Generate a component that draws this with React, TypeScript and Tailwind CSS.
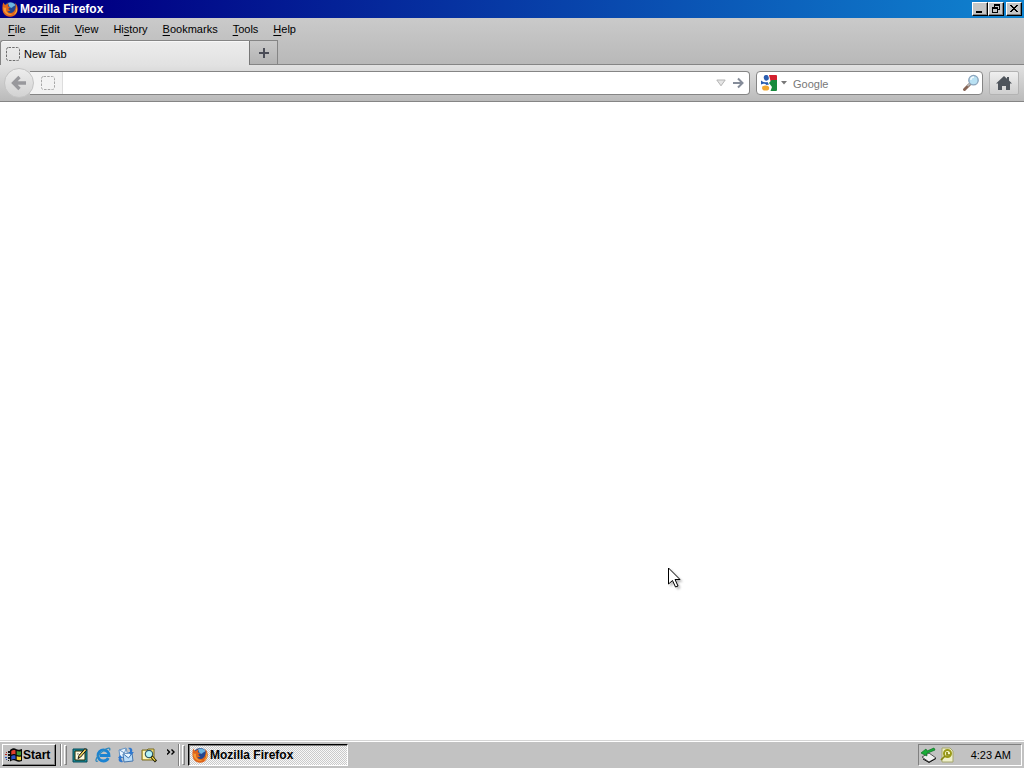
import type { ReactNode } from "react";

function FirefoxIcon() {
  return (
    <svg width="16" height="16" viewBox="0 0 16 16" className="shrink-0" aria-hidden="true">
      <circle cx="8.3" cy="8" r="7" fill="#23468f" />
      <path d="M6 2.200C8 .8 12 1.400 13.400 4c-1 1.600-2.200 1-3 2.200S8 6.600 7 5z" fill="#6db6e0" />
      <path d="M1.200 1.500C.2 4.500 0 9 1.200 11.500 2.800 14.800 6 16 8.500 15.800c4.500-.2 7.300-4 7.200-8C15.600 5 14.500 3 13 2c.8 2 .9 3.800.4 5.300C12.600 10.600 10.700 12 8.600 12c-1.900 0-3-1-3.300-2 1 .4 2.200.1 3.100-.7C7 9 6.500 8.500 6.300 7.600c.9-.3 1.600-.7 1.800-1.300-1-.2-1.900-.7-2.300-1.600.2-1 .6-1.500 1.200-2C5.500 2.600 4.500 3 3.700 4 2.700 3.700 2 2.700 1.200 1.500z" fill="#df641a" />
      <path d="M1.500 6c-.3 2.500.4 4.500 2 6 2 2 5 2.600 7.500 1.300-3.500.2-6.600-1.300-7-4.300-.1-1 0-1.600.3-2.200C3.200 7 2.200 6.800 1.500 6z" fill="#f39a35" />
      <path d="M13.900 5c1.200 3.200.4 6.500-2 8.500 3.200-1.200 4-5 2-8.500z" fill="#fbd44c" />
    </svg>
  );
}

function DashedIcon({ faint = false }: { faint?: boolean }) {
  return (
    <svg width="16" height="16" viewBox="0 0 16 16" className="shrink-0" aria-hidden="true">
      <rect x="1.500" y="1.500" width="13" height="13" rx="2" fill="none" stroke={faint ? "#a8a8a8" : "#6d6d6d"} strokeDasharray="2.500 1.200" />
    </svg>
  );
}

function CaptionButton({ label, children }: { label: string; children: ReactNode }) {
  return (
    <button
      aria-label={label}
      className="flex h-[14px] w-4 items-center justify-center border border-t-white border-r-black border-b-black border-l-white bg-[#c6c6c6] shadow-[inset_-1px_-1px_#808080]"
    >
      <svg width="12" height="12" viewBox="0 0 12 12" shapeRendering="crispEdges" className="shrink-0" aria-hidden="true">
        {children}
      </svg>
    </button>
  );
}

const menus: [string, string, string][] = [
  ["", "F", "ile"],
  ["", "E", "dit"],
  ["", "V", "iew"],
  ["Hi", "s", "tory"],
  ["", "B", "ookmarks"],
  ["", "T", "ools"],
  ["", "H", "elp"],
];

function TitleBar() {
  return (
    <header className="flex h-[18px] items-center bg-linear-to-r/srgb from-[#000084] from-10% to-[#1084d0] px-[2px]">
      <FirefoxIcon />
      <h1 className="ml-[2px] grow text-[12px] font-bold text-white">Mozilla Firefox</h1>
      <div className="flex">
        <CaptionButton label="Minimize">
          <path d="M2 8h6v2H2z" />
        </CaptionButton>
        <CaptionButton label="Restore">
          <path d="M4 1h6v2H4zM9 3h1v4H9zM8 6h2v1H8zM4 3h1v1H4zM2 4h6v2H2zM2 6h1v4H2zM7 6h1v4H7zM2 9h6v1H2z" />
        </CaptionButton>
      </div>
      <div className="ml-[2px] flex">
        <CaptionButton label="Close">
          <path d="M2 2h2v1H2zM8 2h2v1H8zM3 3h2v1H3zM7 3h2v1H7zM4 4h4v1H4zM5 5h2v1H5zM4 6h4v1H4zM3 7h2v1H3zM7 7h2v1H7zM2 8h2v1H2zM8 8h2v1H8z" />
        </CaptionButton>
      </div>
    </header>
  );
}

function SearchEngineIcon() {
  return (
    <svg width="16" height="16" viewBox="0 0 16 16" aria-hidden="true">
      <path d="M8 0h7a1 1 0 0 1 1 1v5H9.500z" fill="#d3202e" />
      <path d="M10.500 5H16v10a1 1 0 0 1-1 1H9.500l1.500-4-3-4z" fill="#178a3c" />
      <ellipse cx="5.300" cy="2.800" rx="2.500" ry="2.900" fill="#2a5db0" transform="rotate(-15 5.300 2.800)" />
      <path d="M0 5.500c2 2 4 1.800 6.500 1.500L8 9.500 5.500 10C4.500 8.500 2 8.200 0 9.500z" fill="#2a5db0" />
      <ellipse cx="4.600" cy="13" rx="3.600" ry="2.600" fill="#f2a72e" />
    </svg>
  );
}

function Toolbar() {
  return (
    <div className="flex h-[37px] items-center border-b border-[#858585] bg-linear-to-b from-[#e2e2e2] to-[#bababa] pr-[5px] pl-1">
      <button
        aria-label="Back"
        className="z-10 flex size-[30px] shrink-0 items-center justify-center rounded-full border border-[#c4c4c4] bg-linear-to-b from-[#ededed] to-[#d2d2d2]"
      >
        <svg width="16" height="16" viewBox="0 0 16 16" aria-hidden="true">
          <path d="M8.500 2L2.500 8l6 6M3 8h12" fill="none" stroke="#98989c" strokeWidth="3.300" />
        </svg>
      </button>
      <div className="-ml-1 flex h-6 grow items-center rounded-r-sm border border-l-0 border-[#858585] bg-white">
        <div className="flex h-full w-[33px] items-center justify-center border-r border-[#ddd] bg-[#f3f3f3] pl-[3px]">
          <DashedIcon faint />
        </div>
        <input aria-label="Address" className="h-full min-w-0 grow px-1 text-[11px] outline-none" />
        <button aria-label="Show history" className="flex w-[18px] justify-center">
          <svg width="10" height="8" viewBox="0 0 10 8" aria-hidden="true">
            <path d="M.8 1h8.400L5 6.800z" fill="#e6e6e6" stroke="#b4b4b4" />
          </svg>
        </button>
        <button aria-label="Go" className="mr-[3px] flex w-4 justify-center">
          <svg width="12" height="12" viewBox="0 0 12 12" aria-hidden="true">
            <path d="M1 6h9M6 1.500L10.500 6 6 10.500" fill="none" stroke="#858c99" strokeWidth="2" />
          </svg>
        </button>
      </div>
      <div className="ml-[6px] flex h-6 w-[227px] items-center rounded-sm border border-[#858585] bg-white pr-[2px] pl-1">
        <button aria-label="Search engine" className="flex items-center gap-1">
          <SearchEngineIcon />
          <svg width="6" height="4" viewBox="0 0 6 4" aria-hidden="true">
            <path d="M0 0h6L3 3.500z" fill="#777" />
          </svg>
        </button>
        <input
          aria-label="Search"
          placeholder="Google"
          className="ml-[6px] h-full min-w-0 grow pt-px text-[11px] outline-none placeholder:text-[#777]"
        />
        <button aria-label="Submit search">
          <svg width="18" height="18" viewBox="0 0 18 18" className="block" aria-hidden="true">
            <path d="M7.500 10.500L2.500 15.500" stroke="#876657" strokeWidth="3" strokeLinecap="round" />
            <path d="M8 9.500l-2.500 2.500" stroke="#b5b5b5" strokeWidth="2" />
            <circle cx="11.500" cy="6.200" r="4.700" fill="#b9e1f3" stroke="#8ba5bd" strokeWidth="1.400" />
            <path d="M8.800 6c.2-2 1.600-3 3.200-3" stroke="#f2fbff" strokeWidth="1.400" fill="none" />
          </svg>
        </button>
      </div>
      <button
        aria-label="Home"
        className="ml-[6px] flex h-6 w-[30px] items-center justify-center rounded-[2px] border border-[#b3b3b3] bg-linear-to-b from-[#efefef] to-[#cfcfcf]"
      >
        <svg width="16" height="14" viewBox="0 0 16 14" aria-hidden="true">
          <path d="M8 0L0 7.500h2V14h4v-4h4v4h4V7.500h2l-3-3V1h-2v1.700z" fill="#4e545b" />
        </svg>
      </button>
    </div>
  );
}

function Grip() {
  return <span className="h-5 w-[3px] border border-t-white border-r-[#808080] border-b-[#808080] border-l-white" />;
}

function Divider() {
  return <span className="h-[22px] w-[2px] border-r border-l border-r-white border-l-[#808080]" />;
}

function WindowsIcon() {
  return (
    <svg width="17" height="16" viewBox="0 0 17 16" className="shrink-0" aria-hidden="true">
      <path d="M5 3c2-2 5-2 6-1 2 1 3 1 6 0v12c-3 1-4 1-6 0-1-1-4-1-6 .5z" fill="#080808" />
      <path d="M6.300 4c1.500-1.200 3-1.200 4.200-.6v4c-1.200-.6-2.700-.6-4.200.3z" fill="#e0402c" />
      <path d="M11.700 4c1.500.6 2.800.6 4.300.2v4c-1.500.4-2.800.4-4.300-.2z" fill="#3d9838" />
      <path d="M6.300 9c1.500-.9 3-.9 4.200-.3v3.800c-1.200-.6-2.700-.5-4.200.4z" fill="#2b52c4" />
      <path d="M11.700 9.300c1.500.5 2.800.5 4.300.1v3.500c-1.500.4-2.800.4-4.300-.2z" fill="#f1cf32" />
      <path d="M3 4h2v2H3zM3 7h2v2H3zM3 10h2v2H3zM3 13h1v1H3z" fill="#111" />
      <path d="M1 5h1v1H1zM0 7h2v1H0z" fill="#b32721" />
      <path d="M0 10h2v1H0zM1 12h1v1H1z" fill="#244bc0" />
    </svg>
  );
}

const launchers: { label: string; art: ReactNode }[] = [
  {
    label: "Show Desktop",
    art: (
      <>
        <path d="M1 2h14v13H1z" fill="#168b9d" stroke="#064a56" />
        <path d="M3 4h10v9H3z" fill="#fffce0" stroke="#292900" />
        <path d="M5 7c2-1 3 2 4 1" fill="none" stroke="#777" />
        <path d="M6 11.500l1-3 6-7 1.600 1.600-6 7z" fill="#f1d45c" stroke="#111" />
      </>
    ),
  },
  {
    label: "Internet Explorer",
    art: (
      <>
        <path d="M13.300 11c-1 2-2.600 3-4.800 3a5.500 5.500 0 1 1 5.500-5.500H5" fill="none" stroke="#1b83d2" strokeWidth="2.800" />
        <path d="M5 7c1-2 2-3 4-3" fill="none" stroke="#67c5f3" strokeWidth="1.200" />
        <path d="M3 14C-2 16 3 7 8 4c5-3.500 8-4 6.500-.5" fill="none" stroke="#3188bb" strokeWidth="1.300" />
      </>
    ),
  },
  {
    label: "Outlook Express",
    art: (
      <>
        <path d="M1 3l7-2 2 8-8 2z" fill="#e9f5ff" stroke="#6693c2" />
        <path d="M1.500 3l5 3L8 1.500" fill="none" stroke="#6693c2" />
        <path d="M5 7l9-1 1 8-9 1z" fill="#b9ddfa" stroke="#4476ae" />
        <path d="M5.500 7l5 4L14 6.500" fill="#eaf7ff" stroke="#4476ae" />
        <path d="M10 1c4-1 5 2 4 4h2l-3 3-3-3h2c0-2 0-3-2-4zM5 15C1 16 0 13 1 11H0l2-3 3 3H3c0 1 1 2 2 4z" fill="#2e78cf" />
      </>
    ),
  },
  {
    label: "Search",
    art: (
      <>
        <path d="M1 3h5l1-1h6v11H1z" fill="#f7df72" stroke="#786b20" />
        <path d="M2 4h6v8H2z" fill="#fff8ba" />
        <circle cx="8" cy="7" r="3.700" fill="#b5f3f6" stroke="#345b67" strokeWidth="1.200" />
        <path d="M10.500 9.500l4.500 5" stroke="#191900" strokeWidth="2.800" />
        <path d="M11 10l3.300 3.700" stroke="#ffe249" strokeWidth="1.200" />
      </>
    ),
  },
];

function Taskbar() {
  return (
    <footer className="flex h-7 items-center border-t border-[#d5d5d5] bg-[#c2c2c2] px-[2px] pt-px text-black shadow-[inset_0_1px_#fff]">
      <button className="flex h-[22px] w-[54px] items-center gap-px border border-t-white border-r-black border-b-black border-l-white pl-[2px] text-[12px] font-bold shadow-[inset_-1px_-1px_#808080]">
        <WindowsIcon />
        <span>Start</span>
      </button>
      <div className="ml-1 flex items-center gap-[2px]">
        <Divider />
        <Grip />
      </div>
      <nav aria-label="Quick launch" className="ml-[5px] flex items-center gap-[7px]">
        {launchers.map(({ label, art }) => (
          <button key={label} aria-label={label}>
            <svg width="16" height="16" viewBox="0 0 16 16" className="block" aria-hidden="true">
              {art}
            </svg>
          </button>
        ))}
        <button aria-label="More" className="mb-[6px] ml-[3px]">
          <svg width="8" height="6" viewBox="0 0 8 6" className="block" aria-hidden="true">
            <path d="M0 .5L2.500 3 0 5.500M4.500.5L7 3 4.500 5.500" fill="none" stroke="#000" strokeWidth="1.400" />
          </svg>
        </button>
      </nav>
      <div className="ml-[3px] flex items-center gap-[2px]">
        <Divider />
        <Grip />
      </div>
      <button className="ml-[3px] flex h-[22px] w-40 items-center gap-[2px] border border-t-black border-r-white border-b-white border-l-black bg-[repeating-conic-gradient(#f8f8f8_0_25%,#cacaca_0_50%)] bg-size-[2px_2px] pl-[3px] text-[12px] font-bold shadow-[inset_1px_1px_#808080]">
        <FirefoxIcon />
        <span>Mozilla Firefox</span>
      </button>
      <div className="ml-auto flex h-[22px] w-[104px] items-center border border-t-[#808080] border-r-white border-b-white border-l-[#808080] pl-[2px]">
        <svg width="16" height="16" viewBox="0 0 16 16" aria-hidden="true">
          <path d="M1 10l7-4 7 5-7 4z" fill="#eee" stroke="#555" />
          <path d="M2 12l6 3.500 7-4" fill="none" stroke="#111" />
          <path d="M13 1L6 4 5 2 0 6l6 3-.5-2.500L14 3z" fill="#19ad37" stroke="#087020" strokeWidth=".7" />
        </svg>
        <svg width="16" height="16" viewBox="0 0 16 16" className="ml-[2px]" aria-hidden="true">
          <path d="M3 1h8l3 3v11H3z" fill="#eeefc9" stroke="#a5a66c" />
          <circle cx="8.500" cy="6.500" r="3.500" fill="#f9f9c9" stroke="#9a9a18" strokeWidth="2" />
          <path d="M6 9l-4 4M8 5v3h3" stroke="#85850c" strokeWidth="1.700" fill="none" />
        </svg>
        <time className="mr-[10px] ml-auto">4:23 AM</time>
      </div>
    </footer>
  );
}

export default function App() {
  return (
    <div className="relative flex min-h-screen flex-col overflow-hidden bg-white font-['Liberation_Sans',Arial,sans-serif] text-[11px] leading-4 text-black">
      <TitleBar />
      <div className="bg-linear-to-b from-[#cacaca] to-[#b8b8b8]">
        <nav aria-label="Menu bar" className="flex h-[22px] items-center gap-[15px] pl-2">
          {menus.map(([before, key, after]) => (
            <button key={before + key + after}>
              {before}
              <span className="underline underline-offset-2">{key}</span>
              {after}
            </button>
          ))}
        </nav>
        <div role="tablist" className="flex h-[25px]">
          <button
            role="tab"
            aria-selected="true"
            className="flex w-[250px] items-center gap-[3px] rounded-tl-[3px] border-t border-r border-l border-t-[#858585] border-r-[#777] border-l-[#858585] bg-linear-to-b from-[#ececec] to-[#e2e2e2] pt-px pl-1 text-left shadow-[inset_0_1px_#f8f8f8]"
          >
            <DashedIcon />
            <span>New Tab</span>
          </button>
          <div className="flex grow border-b border-[#858585]">
            <button
              aria-label="Open a new tab"
              className="flex w-7 items-center justify-center border-t border-r border-[#858585] bg-linear-to-b from-[#c9c9c9] to-[#b3b3b3]"
            >
              <svg width="12" height="12" viewBox="0 0 12 12" shapeRendering="crispEdges" aria-hidden="true">
                <path d="M5 1h2v4h4v2H7v4H5V7H1V5h4z" fill="#4b4d57" />
              </svg>
            </button>
          </div>
        </div>
      </div>
      <Toolbar />
      <main className="grow bg-white" />
      <Taskbar />
      <svg
        width="15"
        height="23"
        viewBox="0 0 15 23"
        className="pointer-events-none absolute top-[567px] left-[668px] drop-shadow-[2px_2px_1px_#0004]"
        aria-hidden="true"
      >
        <path d="M.5 1v16l4-3.500 3 6.500 2.500-1-3-6.500h5z" fill="#fff" stroke="#000" />
      </svg>
    </div>
  );
}
